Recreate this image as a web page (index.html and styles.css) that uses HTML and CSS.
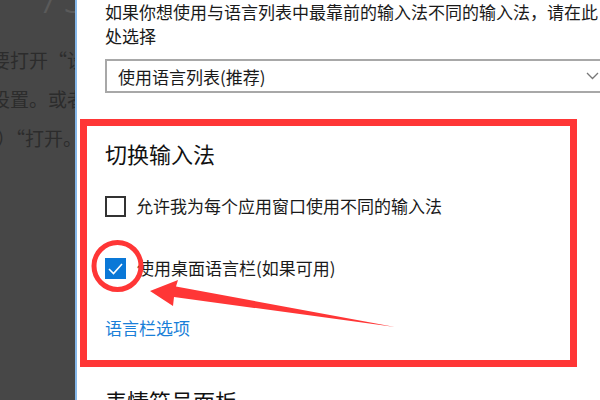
FILE: index.html
```html
<!DOCTYPE html>
<html lang="zh-CN">
<head>
  <meta charset="UTF-8">
  <meta name="viewport" content="width=device-width, initial-scale=1.0">
  <title>切换输入法</title>
  <link rel="stylesheet" href="styles.css">
</head>
<body>
  <aside class="backdrop">
    <div class="backdrop-num">75</div>
    <p>要打开“设置</p>
    <p>设置。或者</p>
    <p>l）“打开。</p>
  </aside>

  <main class="settings">
    <p class="hint">如果你想使用与语言列表中最靠前的输入法不同的输入法，请在此处选择</p>
    <div class="select">
      <span>使用语言列表(推荐)</span>
      <svg class="chevron" width="13" height="8" viewBox="0 0 13 8">
        <polyline points="1,1 6.5,6.5 12,1" fill="none" stroke="#777" stroke-width="1.3"/>
      </svg>
    </div>

    <h2>切换输入法</h2>
    <label class="check">
      <span class="box"></span>
      允许我为每个应用窗口使用不同的输入法
    </label>
    <label class="check checked">
      <span class="box">
        <svg width="21" height="21" viewBox="0 0 21 21">
          <polyline points="4,11 8.5,15.5 17,6" fill="none" stroke="#fff" stroke-width="1.6"/>
        </svg>
      </span>
      使用桌面语言栏(如果可用)
    </label>
    <a class="link" href="#">语言栏选项</a>

    <h2 class="next">表情符号面板</h2>
  </main>

  <!-- red annotation drawn over the screenshot -->
  <svg class="marks" width="600" height="400" viewBox="0 0 600 400">
    <rect x="83.5" y="122.5" width="490" height="241" fill="none" stroke="#ff3636" stroke-width="7"/>
    <circle cx="117.5" cy="266" r="23.5" fill="none" stroke="#ff3636" stroke-width="5"/>
    <polygon points="150,291 178,280 176,286.5 395,327 174,297 173,306" fill="#ff3636"/>
  </svg>
</body>
</html>
```

FILE: styles.css
```css
* {
  margin: 0; padding: 0; box-sizing: border-box;
}
body {
  width: 600px;
  height: 400px;
  overflow: hidden;
  display: flex;
  background: #fff;
  font-family: "Noto Sans CJK SC", "Noto Sans", sans-serif;
  color: #1a1a1a;
  position: relative;
}
.backdrop {
  width: 75px;
  flex-shrink: 0;
  background: #474747;
  overflow: hidden;
  color: #2c2c2c;
  font-size: 19px;
}
.backdrop-num {
  font-size: 46px;
  line-height: 46px;
  margin-top: -28px;
  margin-left: 36px;
  color: #5a5a5a;
  font-family: "Open Sans", sans-serif;
  font-weight: 300;
}
.backdrop p {
  white-space: nowrap;
  line-height: 39px;
  margin-left: -9px;
}
.backdrop p:first-of-type {
  margin-top: 22px;
}
.settings {
  flex: 1;
  border-left: 2px solid #86b8ea;
  padding-left: 28px;
  overflow: hidden;
}
.hint {
  width: 495px;
  font-size: 17px;
  line-height: 24px;
}
.select {
  margin-top: 11px;
  width: 500px;
  height: 34px;
  border: 2px solid #a8a8a8;
  display: flex;
  align-items: center;
  justify-content: space-between;
  padding: 0 4px 0 11px;
  font-size: 17px;
}
h2 {
  font-weight: 400;
  font-size: 22px;
  line-height: 30px;
  color: #111;
  margin-top: 45px;
}
.check {
  display: flex;
  align-items: center;
  gap: 10px;
  font-size: 17px;
  line-height: 22px;
  margin-top: 27px;
}
.check + .check {
  margin-top: 40px;
}
.box {
  width: 21px;
  height: 21px;
  border: 2px solid #333;
  flex-shrink: 0;
}
.checked .box {
  border: none;
  background: #0a78d7;
  margin-right: 1px;
}
.checked .box svg {
  display: block;
}
.link {
  display: block;
  margin-top: 37px;
  font-size: 17px;
  line-height: 24px;
  color: #1a7fd8;
  text-decoration: none;
}
.next {
  margin-top: 45px;
}
.marks {
  position: absolute;
  left: 0;
  top: 0;
  pointer-events: none;
}
```
